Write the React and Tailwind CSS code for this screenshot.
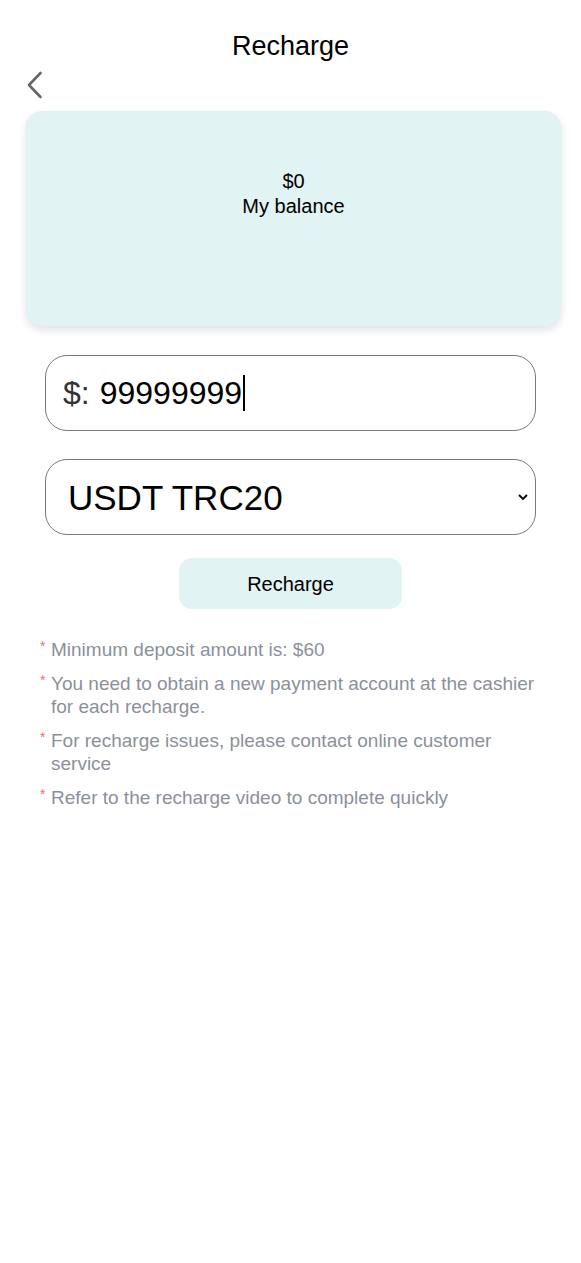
export default function App() {
  const notes = [
    "Minimum deposit amount is: $60",
    "You need to obtain a new payment account at the cashier for each recharge.",
    "For recharge issues, please contact online customer service",
    "Refer to the recharge video to complete quickly",
  ];
  return (
    <div className="w-[581px] min-h-[1263px] bg-white text-black" style={{ fontFamily: '"Liberation Sans", Arial, sans-serif' }}>
      <div className="pt-[30px] h-[64px] text-center text-[27px] leading-[32px]">Recharge</div>
      <div className="pl-[26px] h-[47px] pt-[7px]">
        <svg width="18" height="28" viewBox="0 0 18 28" fill="none">
          <path d="M14.5 2 L3 14 L14.5 26" stroke="#666" strokeWidth="2.6" strokeLinecap="round" strokeLinejoin="round" />
        </svg>
      </div>
      <div className="ml-[26px] w-[535px] h-[215px] rounded-[16px] bg-[#e1f3f3] shadow-[0_4px_8px_rgba(0,0,0,0.12)] pt-[58px] text-center text-[20px] leading-[25px]">
        <div>$0</div>
        <div>My balance</div>
      </div>
      <div className="mx-[45px] mt-[29px] h-[76px] rounded-[22px] border border-[#7a7a7a] flex items-center pl-[17px] text-[32px]">
        <span className="text-[#333]">$:</span>
        <span className="ml-[10px]">99999999</span>
        <span className="w-[2px] h-[36px] bg-black ml-[1px]"></span>
      </div>
      <div className="mx-[45px] mt-[28px] h-[76px] rounded-[22px] border border-[#7a7a7a] flex items-center pl-[22px] pr-[6px] text-[35px]">
        <span className="flex-1 pt-[2px]">USDT TRC20</span>
        <svg width="12" height="8" viewBox="0 0 12 8" fill="none">
          <path d="M2 2 L6 6 L10 2" stroke="#000" strokeWidth="1.8" />
        </svg>
      </div>
      <div className="flex justify-center mt-[23px]">
        <div className="w-[223px] h-[51px] rounded-[13px] bg-[#e1f3f3] flex items-center justify-center text-[20px]">Recharge</div>
      </div>
      <div className="mt-[29px] pl-[40px] pr-[40px] flex flex-col gap-[11px]">
        {notes.map((n, i) => (
          <div key={i} className="flex text-[19px] leading-[23px] text-[#8b909a]">
            <span className="text-[#f56c6c] text-[14px] leading-[14px] w-[11px] shrink-0 pt-[1px]">*</span>
            <span>{n}</span>
          </div>
        ))}
      </div>
    </div>
  );
}
